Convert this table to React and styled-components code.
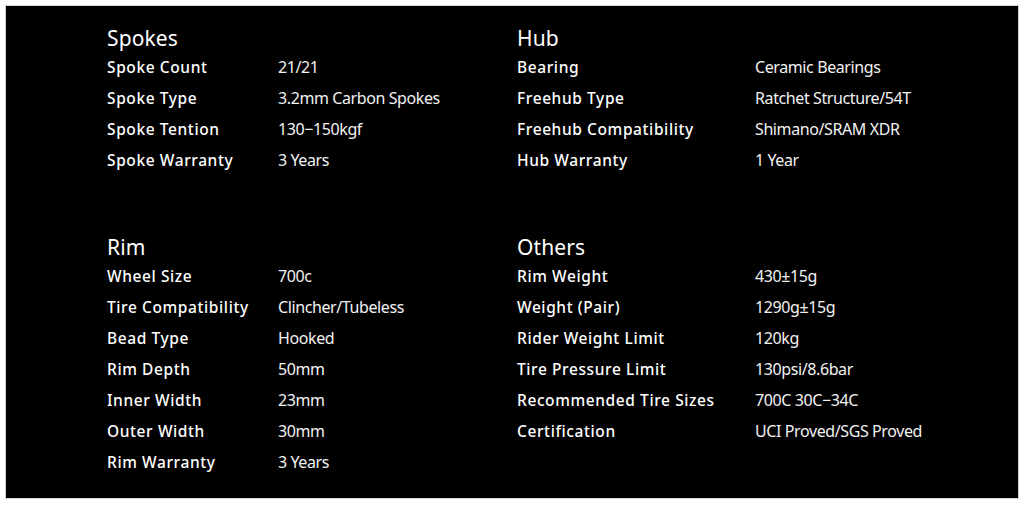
import React from "react";
import styled, { createGlobalStyle } from "styled-components";

const GlobalStyle = createGlobalStyle`
  html, body { margin: 0; padding: 0; background: #ffffff; }
  body { font-family: "Noto Sans", "Liberation Sans", sans-serif; }
`;

const Panel = styled.div`
  margin: 6px;
  width: 1012px;
  height: 492px;
  box-sizing: border-box;
  background: #000;
  box-shadow: 0 0 0 1px #d4d4d4;
  padding: 18px 0 0 101px;
  display: grid;
  grid-template-columns: 410px 400px;
  row-gap: 57px;
  align-content: start;
`;

const Section = styled.section`
  display: grid;
  grid-template-columns: ${(p) => p.$labelWidth}px auto;
  align-content: start;
`;

const Heading = styled.h2`
  grid-column: 1 / -1;
  margin: 0;
  height: 28px;
  line-height: 28px;
  font-size: 21px;
  font-weight: 400;
  color: #ffffff;
  letter-spacing: 0.1px;
`;

const Label = styled.div`
  height: 31px;
  line-height: 31px;
  font-size: 15.5px;
  font-weight: 500;
  color: #ffffff;
  letter-spacing: 0.6px;
  white-space: nowrap;
`;

const Value = styled.div`
  height: 31px;
  line-height: 31px;
  font-size: 16px;
  font-weight: 400;
  color: #f2f2f2;
  letter-spacing: -0.4px;
  white-space: nowrap;
`;

const sections = [
  {
    title: "Spokes",
    labelWidth: 171,
    rows: [
      ["Spoke Count", "21/21"],
      ["Spoke Type", "3.2mm Carbon Spokes"],
      ["Spoke Tention", "130−150kgf"],
      ["Spoke Warranty", "3 Years"],
    ],
  },
  {
    title: "Hub",
    labelWidth: 238,
    rows: [
      ["Bearing", "Ceramic Bearings"],
      ["Freehub Type", "Ratchet Structure/54T"],
      ["Freehub Compatibility", "Shimano/SRAM XDR"],
      ["Hub Warranty", "1 Year"],
    ],
  },
  {
    title: "Rim",
    labelWidth: 171,
    rows: [
      ["Wheel Size", "700c"],
      ["Tire Compatibility", "Clincher/Tubeless"],
      ["Bead Type", "Hooked"],
      ["Rim Depth", "50mm"],
      ["Inner Width", "23mm"],
      ["Outer Width", "30mm"],
      ["Rim Warranty", "3 Years"],
    ],
  },
  {
    title: "Others",
    labelWidth: 238,
    rows: [
      ["Rim Weight", "430±15g"],
      ["Weight (Pair)", "1290g±15g"],
      ["Rider Weight Limit", "120kg"],
      ["Tire Pressure Limit", "130psi/8.6bar"],
      ["Recommended Tire Sizes", "700C 30C−34C"],
      ["Certification", "UCI Proved/SGS Proved"],
    ],
  },
];

export default function App() {
  return (
    <>
      <GlobalStyle />
      <Panel>
        {sections.map((s) => (
          <Section key={s.title} $labelWidth={s.labelWidth}>
            <Heading>{s.title}</Heading>
            {s.rows.map(([l, v]) => (
              <React.Fragment key={l}>
                <Label>{l}</Label>
                <Value>{v}</Value>
              </React.Fragment>
            ))}
          </Section>
        ))}
      </Panel>
    </>
  );
}
